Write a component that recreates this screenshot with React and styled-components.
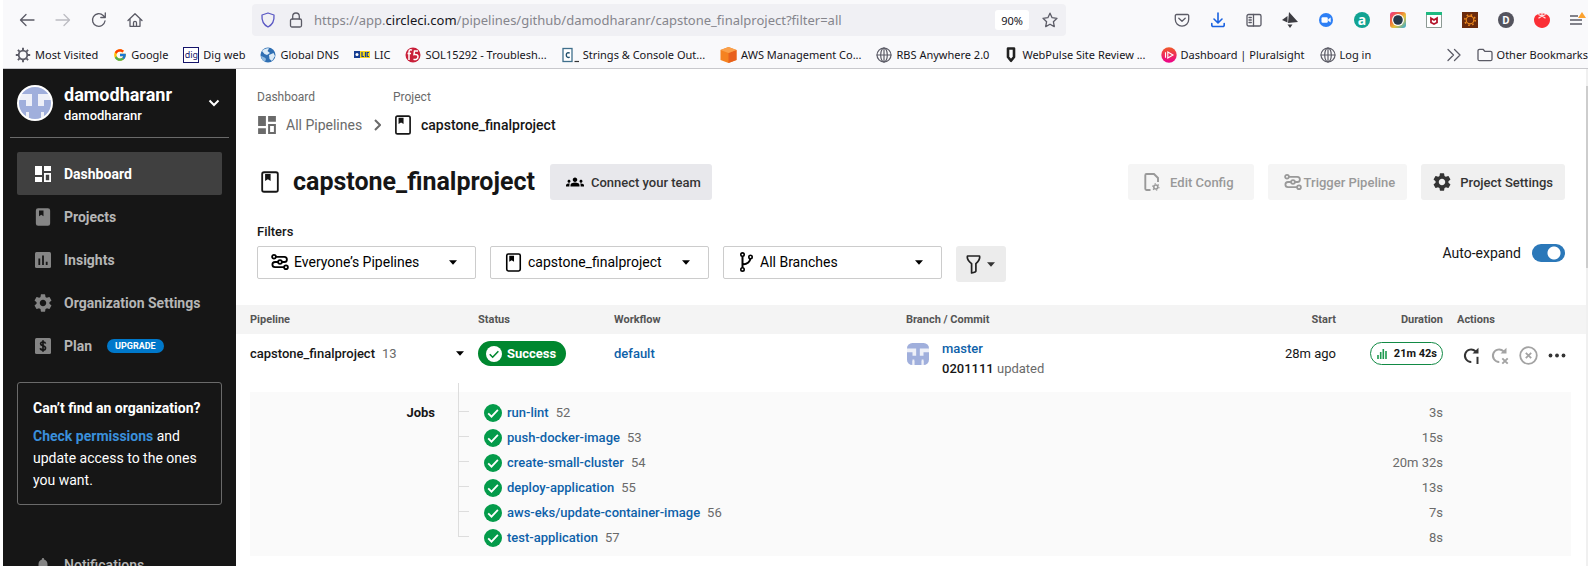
import React from 'react';
import styled, { createGlobalStyle, css } from 'styled-components';
import { FcGoogle } from 'react-icons/fc';
import { MdSettings, MdGroups, MdNotifications } from 'react-icons/md';

const UI = `Roboto, "Liberation Sans", sans-serif`;
const CHROME = `"Noto Sans", "Open Sans", sans-serif`;
const INK = '#161616';
const MUTED = '#6a6a6a';
const LINK = '#0d61a9';

const GlobalStyle = createGlobalStyle`
  * { box-sizing: border-box; }
  body { margin: 0; background: #fff; font-family: ${UI}; color: ${INK}; }
  button, select, input { font: inherit; color: inherit; }
  svg { display: block; flex: none; }
  a { text-decoration: none; }
`;

/* ---------- shell ---------- */
const Shell = styled.div`
  height: 100vh;
  display: flex;
  flex-direction: column;
  overflow: hidden;
  padding-left: 3px;
`;
const Body = styled.div`
  flex: 1;
  min-height: 0;
  display: flex;
`;

/* ---------- browser bars ---------- */
const Browser = styled.header`
  flex: none;
  background: #f9f9fb;
  border-bottom: 1px solid #c8c8cc;
  font-family: ${CHROME};
  color: #15141a;
`;
const Toolbar = styled.div`
  display: flex;
  align-items: center;
  height: 40px;
  padding: 0 2px 0 16px;
`;
const NavButtons = styled.div`
  display: flex;
  gap: 20px;
  margin-right: 109px;
`;
const IconButton = styled.button`
  display: flex;
  align-items: center;
  justify-content: center;
  min-width: 16px;
  height: 16px;
  padding: 0;
  border: 0;
  background: none;
  color: ${(p) => p.$color || '#5b5b66'};
`;
const AddressBar = styled.div`
  flex: 1;
  min-width: 0;
  display: flex;
  align-items: center;
  height: 32px;
  padding: 0 8px;
  border-radius: 4px;
  background: #f0f0f4;
`;
const LockButton = styled(IconButton)`
  margin: 0 10px 0 12px;
`;
const Address = styled.div`
  flex: 1;
  min-width: 0;
  font-size: 13px;
  line-height: 20px;
  white-space: nowrap;
  overflow: hidden;
  color: #85858c;
  outline: none;
  strong { font-weight: 400; color: #15141a; }
`;
const Zoom = styled.button`
  height: 20px;
  width: 34px;
  margin-right: 13px;
  padding: 0;
  border: 0;
  border-radius: 3px;
  background: #fff;
  font-size: 11px;
`;
const Extensions = styled.div`
  display: flex;
  justify-content: space-between;
  width: 412px;
  margin-left: 108px;
`;
const Tile = styled.span`
  display: flex;
  align-items: center;
  justify-content: center;
  width: 16px;
  height: 16px;
  border-radius: ${(p) => (p.$round ? '50%' : '0')};
  background: ${(p) => p.$bg};
  color: ${(p) => p.$fg || '#fff'};
  border: ${(p) => (p.$edge ? `1px solid ${p.$edge}` : '0')};
  font: ${(p) => p.$weight || 700} ${(p) => p.$size || 10}px/14px ${CHROME};
`;
const Bookmarks = styled.nav`
  display: flex;
  align-items: center;
  height: 28px;
  padding: 1px 0 0 12px;
  gap: 15px;
  white-space: nowrap;
`;
const Bookmark = styled.a`
  display: flex;
  align-items: center;
  gap: 4px;
  font-size: 11px;
  line-height: 16px;
  color: #15141a;
`;
const Overflow = styled(IconButton)`
  margin-left: auto;
`;

/* ---------- sidebar ---------- */
const Sidebar = styled.aside`
  flex: none;
  width: 233px;
  overflow: hidden;
  background: ${INK};
  color: #fff;
  padding: 0 7px;
`;
const Account = styled.button`
  display: flex;
  align-items: center;
  width: 100%;
  height: 69px;
  padding: 0 9px 0 7px;
  border: 0;
  border-bottom: 1px solid ${MUTED};
  background: none;
  text-align: left;
  color: #fff;
`;
const AccountNames = styled.span`
  flex: 1;
  margin-left: 11px;
  padding-top: 4px;
`;
const AccountOrg = styled.span`
  display: block;
  font-size: 18px;
  font-weight: 700;
  line-height: 22px;
`;
const AccountUser = styled.span`
  display: block;
  font-size: 13px;
  font-weight: 500;
  line-height: 20px;
`;
const Menu = styled.nav`
  display: flex;
  flex-direction: column;
  padding: 14px 7px 0;
`;
const MenuItem = styled.a`
  display: flex;
  align-items: center;
  height: 43px;
  padding-left: 17px;
  gap: 12px;
  border-radius: 2px;
  font-size: 14px;
  font-weight: ${(p) => (p.$plain ? 500 : 700)};
  color: ${(p) => (p.$active ? '#fff' : '#b5b5b5')};
  background: ${(p) => (p.$active ? '#404040' : 'transparent')};
  svg { color: ${(p) => (p.$active ? '#fff' : '#858585')}; }
`;
const Upgrade = styled.span`
  margin-left: 3px;
  padding: 0 8px;
  border-radius: 7px;
  background: #0078ca;
  color: #fff;
  font-size: 9px;
  font-weight: 700;
  line-height: 14px;
`;
const HelpCard = styled.section`
  margin: 15px 7px 24px;
  padding: 14px 15px 13px;
  border: 1px solid ${MUTED};
  border-radius: 3px;
  font-size: 14px;
  line-height: 22px;
  h2 { margin: 0 0 6px; font-size: 14px; font-weight: 700; line-height: 22px; white-space: nowrap; }
  p { margin: 0; }
  a { color: #3a8fdb; font-weight: 700; }
`;

/* ---------- main ---------- */
const Main = styled.main`
  flex: 1;
  min-width: 0;
  overflow: hidden;
`;
const Crumbs = styled.nav`
  display: flex;
  padding: 19px 21px 0;
`;
const Crumb = styled.div`
  color: ${MUTED};
  ${(p) => p.$wide && css`width: 136px;`}
`;
const CrumbLabel = styled.div`
  font-size: 12px;
  line-height: 18px;
`;
const CrumbLink = styled.a`
  display: flex;
  align-items: center;
  gap: ${(p) => (p.$current ? 8 : 9)}px;
  height: 38px;
  font-size: 14px;
  font-weight: ${(p) => (p.$current ? 500 : 400)};
  color: ${(p) => (p.$current ? INK : MUTED)};
  white-space: nowrap;
`;
const CrumbText = styled.span`
  margin-right: 3px;
`;
const TitleRow = styled.div`
  display: flex;
  align-items: center;
  gap: 15px;
  padding: 20px 21px 0 23px;
`;
const Title = styled.h1`
  display: flex;
  align-items: center;
  gap: 12px;
  margin: 0;
  font-size: 25px;
  font-weight: 700;
  line-height: 36px;
`;
const ButtonGroup = styled.div`
  display: flex;
  gap: 14px;
  margin-left: auto;
`;
const Button = styled.button`
  display: flex;
  align-items: center;
  height: 36px;
  gap: ${(p) => p.$gap}px;
  padding: 0 ${(p) => p.$pad || 12}px 0 ${(p) => p.$lead || 16}px;
  border: 0;
  border-radius: 3px;
  background: ${(p) => p.$bg || '#f0f0f0'};
  color: ${(p) => p.$fg || '#343434'};
  font-size: 13px;
  font-weight: 500;
  white-space: nowrap;
  &:disabled { background: #f5f5f5; color: #999; }
`;
const FilterBar = styled.div`
  display: flex;
  justify-content: space-between;
  padding: 22px 21px 23px;
`;
const FilterLabel = styled.div`
  font-size: 13px;
  font-weight: 500;
  line-height: 20px;
  margin-bottom: 4px;
`;
const FilterControls = styled.div`
  display: flex;
  align-items: flex-start;
  gap: 14px;
`;
const SelectBox = styled.label`
  display: flex;
  align-items: center;
  width: 219px;
  height: 33px;
  padding: 0 18px 1px 13px;
  gap: 5px;
  border: 1px solid #ccc;
  border-radius: 2px;
  background: #fff;
  color: #000;
  select {
    flex: 1;
    min-width: 0;
    padding: 0;
    border: 0;
    background: none;
    appearance: none;
    font-size: 14px;
    line-height: 20px;
  }
`;
const Toggle = styled.label`
  display: flex;
  align-items: center;
  gap: 11px;
  height: 18px;
  margin-top: 22px;
  font-size: 14px;
  input {
    appearance: none;
    width: 33px;
    height: 18px;
    margin: 0;
    border-radius: 9px;
    background: radial-gradient(circle at 22px 9px, #fff 6px, transparent 7px), #2b78b9;
  }
`;

const Table = styled.table`
  width: 100%;
  table-layout: fixed;
  border-collapse: collapse;
  font-size: 13px;
  line-height: 20px;
  th {
    height: 29px;
    padding: 0;
    background: #f4f4f4;
    color: #555;
    font-size: 11px;
    font-weight: 700;
    line-height: 16px;
    text-align: left;
  }
  td { padding: 0; }
`;
const Head = styled.th`
  && {
    text-align: ${(p) => (p.$right ? 'right' : 'left')};
    padding-left: ${(p) => (p.$inset ? 14 : 0)}px;
  }
`;
const Cell = styled.td`
  && {
    height: 58px;
    padding: 7px 0 0 ${(p) => (p.$inset ? 14 : 0)}px;
    vertical-align: top;
    text-align: ${(p) => (p.$right ? 'right' : 'left')};
  }
`;
const Line = styled.div`
  display: flex;
  align-items: center;
  height: 25px;
  gap: 7px;
  justify-content: ${(p) => (p.$right ? 'flex-end' : 'flex-start')};
`;
const Name = styled.span`
  font-weight: 500;
`;
const Num = styled.span`
  color: ${MUTED};
`;
const Expand = styled(IconButton)`
  margin-left: auto;
  margin-right: 10px;
`;
const Link = styled.a`
  font-weight: 500;
  color: ${LINK};
`;
const Status = styled.span`
  display: flex;
  align-items: center;
  gap: 5px;
  height: 25px;
  padding: 0 10px 0 8px;
  border-radius: 13px;
  background: #00872f;
  color: #fff;
  font-weight: 700;
`;
const Commit = styled.div`
  display: flex;
  gap: 13px;
  padding: 2px 0 0 1px;
`;
const CommitText = styled.div`
  line-height: 20px;
  margin-top: -4px;
`;
const Duration = styled.span`
  display: flex;
  align-items: center;
  gap: 7px;
  height: 23px;
  padding: 0 5px 0 6px;
  border: 1px solid #128a45;
  border-radius: 12px;
  font-size: 11px;
  font-weight: 700;
`;
const Actions = styled.div`
  display: flex;
  align-items: center;
  gap: 10px;
  height: 29px;
  padding-left: 6px;
`;
const JobsPanel = styled.div`
  display: flex;
  margin: 0 15px 0 14px;
  padding: 8px 128px 6px 0;
  background: #fafafa;
`;
const JobsLabel = styled.h2`
  width: 185px;
  margin: 0 23px 0 0;
  font-size: 13px;
  font-weight: 700;
  line-height: 25px;
  text-align: right;
`;
const JobList = styled.ul`
  flex: 1;
  margin: 0;
  padding: 0;
  list-style: none;
`;
const Job = styled.li`
  display: flex;
  align-items: center;
  height: 25px;
`;
const Connector = styled.span`
  align-self: flex-start;
  width: 11px;
  height: ${(p) => (p.$first ? 29 : 25)}px;
  margin: ${(p) => (p.$first ? -17 : -13)}px 15px 0 0;
  border-left: 1px solid #ddd;
  border-bottom: 1px solid #ddd;
`;
const JobName = styled(Link)`
  margin: 0 7px 0 5px;
`;
const JobTime = styled(Num)`
  margin-left: auto;
`;
const ScrollTrack = styled.div`
  flex: none;
  width: 2px;
  background: #f0f0f0;
  padding-top: 17px;
`;
const ScrollThumb = styled.div`
  height: 38%;
  background: #cdcdcd;
`;

/* ---------- icons ---------- */
const Svg = ({ s = 16, w, h, vb = '0 0 16 16', children, ...rest }) => (
  <svg width={w || s} height={h || s} viewBox={vb} fill="none" aria-hidden="true" {...rest}>{children}</svg>
);
const Stroke = (props) => (
  <Svg stroke="currentColor" strokeWidth="1.3" strokeLinecap="round" strokeLinejoin="round" {...props} />
);
const Back = () => <Stroke><path d="M15 8H2M7 2.5 1.5 8 7 13.5" /></Stroke>;
const Forward = () => <Stroke><path d="M1 8h13M9 2.5 14.5 8 9 13.5" /></Stroke>;
const Reload = () => <Stroke><path d="M14 9a6.3 6.3 0 1 1-1.8-5.5L14 5.2M14.3 1v4.5H9.8" /></Stroke>;
const Home = () => <Stroke><path d="M1 8.5 8 1.7l7 6.8M3 7v7.3h10V7M6.500 14v-3.200a1.500 1.500 0 0 1 3 0V14" /></Stroke>;
const Shield = () => <Stroke stroke="#5a58c4"><path d="M8 1 14 3c.4 5-1 9.500-6 12C3 12.500 1.600 8 2 3Z" /></Stroke>;
const Lock = () => <Stroke><rect x="2.5" y="7" width="11" height="8" rx="1.5" /><path d="M4.700 7V4.300a3.300 3.300 0 0 1 6.600 0V7" /></Stroke>;
const Star = () => <Stroke><path d="m8 1.200 2.100 4.500 4.900.6-3.600 3.400.9 4.900L8 12.200l-4.300 2.400.9-4.900L1 6.300l4.900-.6Z" /></Stroke>;
const Pocket = () => <Stroke><path d="M2.500 2.500h11a1.200 1.200 0 0 1 1.200 1.200v3.800a6.700 6.700 0 0 1-13.400 0V3.700a1.200 1.200 0 0 1 1.200-1.200ZM4.800 6.300 8 9.300l3.200-3" /></Stroke>;
const Download = () => <Stroke stroke="#1a62e0" strokeWidth="1.6"><path d="M8 1v9.500M4 7l4 4 4-4M1.800 11.500v1.700a1.300 1.300 0 0 0 1.300 1.300h9.800a1.300 1.300 0 0 0 1.300-1.300v-1.700" /></Stroke>;
const SidebarIcon = () => <Stroke><rect x="1" y="2.5" width="14" height="11.5" rx="1.5" /><path d="M7.500 2.500V14M3 5.500h2.300M3 8h2.300M3 10.500h2.300" /></Stroke>;
const Arrowhead = () => <Svg fill="#3d3d42"><path d="M7 0 16 10 6 11ZM5.500 4v6.500L0 8ZM5.500 12.500h5L8 16Z" /></Svg>;
const Camera = () => <Svg><circle cx="8" cy="8" r="7" fill="#2d7ff5" /><rect x="3.5" y="5.3" width="6.3" height="5.4" rx="1.2" fill="#fff" /><path d="m10.200 7.300 2.500-1.700v4.800l-2.500-1.700Z" fill="#fff" /></Svg>;
const Lens = () => (
  <Svg>
    <defs><linearGradient id="lens" x1="0" y1="0" x2="1" y2="1"><stop offset="0" stopColor="#f0308a" /><stop offset=".35" stopColor="#f0703a" /><stop offset=".6" stopColor="#e8c23a" /><stop offset="1" stopColor="#25a8e0" /></linearGradient></defs>
    <rect width="16" height="16" rx="3" fill="url(#lens)" /><circle cx="8" cy="8" r="6" fill="#fff" /><circle cx="8" cy="8" r="4.8" fill="#26384a" />
  </Svg>
);
const Mcafee = () => <Svg><path d="M.5.5h15v15H.5Z" fill="#fff" stroke="#8d9a94" /><path d="M0 0h16v3H0Z" fill="#1fb980" /><path d="M5 6.200 8 8l3-1.800v4.300L8 12l-3-1.500Z" stroke="#b3152b" strokeWidth="1.8" /></Svg>;
const GearTile = () => <Svg><rect width="16" height="16" fill="#6b2a0c" /><circle cx="8" cy="8" r="3.8" stroke="#ef8a1d" strokeWidth="1.2" /><circle cx="8" cy="8" r="5.2" stroke="#ef8a1d" strokeWidth="1.6" strokeDasharray="1.6 2.484" /></Svg>;
const Tomato = () => <Svg><path d="M8 1.500c5 0 8 2.500 8 6.500S12.500 16 8 16 0 12.300 0 8s3-6.500 8-6.500Z" fill="#fb2f35" /><path d="M8 0v4M4.300 2.500 8 4l3.700-1.500M4.500 6.300 8 4l3.500 2.300" stroke="#fde4e4" strokeWidth="1.2" /></Svg>;
const Hamburger = () => <Svg><path d="M0 4h8M0 8h12M0 12h12" stroke="#5b5b66" strokeWidth="1.3" /><path d="m12 0 4 6H8Z" fill="#fca22f" /></Svg>;
const Cog = () => <Svg><circle cx="8" cy="8" r="4.3" stroke="#5b5b66" strokeWidth="1.8" /><path d="M8 .8v2.500M8 12.700v2.500M.8 8h2.500M12.700 8h2.500M2.900 2.900l1.700 1.700M11.400 11.400l1.700 1.700M2.900 13.100l1.700-1.700M11.400 4.600l1.700-1.700" stroke="#5b5b66" strokeWidth="1.9" /></Svg>;
const Earth = () => <Svg><circle cx="8" cy="8" r="7.5" fill="#2f6fb3" /><path d="M2 4c2-2 5-3 7-2.500L7.500 4 10 6 7 8 4.500 7ZM9 8l4.500-2 1.500 3-3 5-2.500-2Z" fill="#dcebf7" /><path d="M1 9c2 1 4 1 5 3l-1 3C3 14 1.200 12 1 9Z" fill="#8fb9de" /></Svg>;
const F5 = () => <Svg><circle cx="8" cy="8" r="7.5" fill="#c9203a" /><path d="M7 3.200c-2-1-3 0-3 2V13M2.500 6.500H6M13 4H9.500L9 7.500c3-.5 4 .8 4 2.300 0 2-2 3.200-4.500 2.400" stroke="#fff" strokeWidth="1.5" /></Svg>;
const Lic = () => <Svg><path d="M0 4h6v7H0Z" fill="#173e91" /><path d="M6 4h10v7H6Z" fill="#f4d51d" /><circle cx="3" cy="7.5" r="1.5" fill="#fff" /><path d="M8 5v4.500h2M11.500 5v5M15 5.500h-1.800v4H15" stroke="#173e91" strokeWidth="1.2" /></Svg>;
const Cube = () => <Svg w={17} vb="0 0 17 16"><path d="M8.500 0 16.500 3v10l-8 3-8-3V3Z" fill="#f58220" /><path d="M8.500 6 16.500 3v10l-8 3Z" fill="#e8601c" /><path d="M8.500 0 16.500 3l-8 3-8-3Z" fill="#faa04b" /></Svg>;
const Globe = () => <Stroke strokeWidth="1.2" stroke="#5b5b66"><circle cx="8" cy="8" r="7" /><ellipse cx="8" cy="8" rx="3.3" ry="7" /><path d="M1 8h14M8 1v14" /></Stroke>;
const DarkShield = () => <Svg w={14} vb="0 0 14 16"><path d="M4 1.500h6v8.500L7 13.800 4 10Z" fill="#fff" stroke="#222" strokeWidth="2.6" strokeLinejoin="round" /></Svg>;
const Plural = () => (
  <Svg><defs><linearGradient id="plural" x1="0" y1="0" x2="0" y2="1"><stop stopColor="#f05a28" /><stop offset="1" stopColor="#ec008c" /></linearGradient></defs><circle cx="8" cy="8" r="7.7" fill="url(#plural)" /><path d="M6.800 5 12 8l-5.200 3ZM4.500 5.300v5.400" stroke="#fff" strokeWidth="1.1" /></Svg>
);
const Folder = () => <Stroke stroke="#5b5b66"><path d="M1 3.800a1.500 1.500 0 0 1 1.500-1.500H6l1.800 2h5.700A1.500 1.500 0 0 1 15 5.800v6.400a1.500 1.500 0 0 1-1.500 1.500h-11A1.500 1.500 0 0 1 1 12.200Z" /></Stroke>;
const More = () => <Stroke><path d="m2 2.500 5.500 5.500L2 13.500M8.500 2.500 14 8l-5.500 5.500" /></Stroke>;
const Terminal = () => (
  <Svg w={17} vb="0 0 17 16">
    <rect x="1" y="1.5" width="9" height="13" stroke="#3f6f8c" strokeWidth="1.3" fill="#fff" />
    <path d="M7.700 6.200c-1.600-1-3.400-.2-3.400 1.900s1.800 3 3.400 1.900" stroke="#22506d" strokeWidth="1.4" /><path d="M12.500 14.500H17" stroke="#333" strokeWidth="1.2" />
  </Svg>
);

const DashboardIcon = ({ s = 18 }) => <Svg s={s} vb="0 0 18 18"><path d="M1 1h7v9H1ZM1 12h7v5H1ZM10 1h7v5h-7Z" fill="currentColor" /><path d="M10.900 8.900h5.200v7.200h-5.200Z" stroke="currentColor" strokeWidth="1.8" /></Svg>;
const Book = ({ s = 18, solid }) => (
  <Svg s={s} vb="0 0 18 18">
    <rect x="2.6" y="1" width="12.8" height="16" rx="1.5" stroke="currentColor" strokeWidth="1.5" fill={solid ? 'currentColor' : 'none'} />
    <path d="M5 2.500h4.500v5.700L7.250 6.800 5 8.200Z" fill={solid ? INK : 'currentColor'} />
  </Svg>
);
const Gear = () => <MdSettings size={18} viewBox="2 2 20 20" />;
const Insights = () => <Svg s={18} vb="0 0 18 18"><rect x="1" y="1" width="16" height="16" rx="1.5" fill="currentColor" /><path d="M5.300 7.500V14M9 4.500V14M12.700 10.800V14" stroke={INK} strokeWidth="1.8" /></Svg>;
const Plan = () => <Svg s={18} vb="0 0 18 18"><rect x="1" y="1" width="16" height="16" rx="1.5" fill="currentColor" /><path d="M11.500 6.600C11.300 5.400 10.300 5 9 5S6.600 5.500 6.600 6.800C6.600 9.400 11.500 8 11.500 10.900 11.500 12.300 10.300 13 9 13s-2.500-.6-2.600-1.900M9 3.300v11.400" stroke={INK} strokeWidth="1.7" /></Svg>;
const Pipelines = () => (
  <Svg s={18} vb="0 0 18 18" stroke="currentColor" strokeWidth="1.8">
    <circle cx="3" cy="3.8" r="1.9" /><circle cx="9" cy="9" r="1.9" /><circle cx="15" cy="14.2" r="1.9" />
    <path d="M5 3.800h8.300a2.600 2.600 0 0 1 0 5.200H11M7 9H4a2.600 2.600 0 0 0 0 5.200h9" />
  </Svg>
);
const Branch = () => (
  <Svg s={18} h={20} vb="0 0 18 20" stroke="currentColor" strokeWidth="1.6">
    <circle cx="5.5" cy="2.6" r="1.7" /><circle cx="5.5" cy="17.4" r="1.7" /><circle cx="13.5" cy="5" r="1.7" />
    <path d="M5.500 4.300v11.400M13.300 6.700c-.3 4-3.800 5.300-7.800 5.800" strokeWidth="2" />
  </Svg>
);
const Funnel = () => <Svg w={15} h={19} vb="0 0 15 19" stroke="#222" strokeWidth="1.7" strokeLinejoin="round"><path d="M1.500 1h12c.8 2.700-1 5.300-3.600 7.600V16c0 .7-1.300 1.500-4.300 2V8.600C2.500 6.300.7 3.700 1.500 1Z" /></Svg>;
const Caret = () => <Svg w={8} h={5} vb="0 0 8 5"><path d="M0 .3h8L4 4.700Z" fill="currentColor" /></Svg>;
const Chevron = ({ right }) => (
  <Svg w={right ? 7 : 12} h={12} vb={right ? '0 0 7 12' : '0 0 12 12'} stroke="currentColor" strokeWidth="2">
    <path d={right ? 'M1 1l5 5-5 5' : 'M1.500 3.500 6 8l4.500-4.500'} />
  </Svg>
);
const EditFile = () => (
  <Svg w={16} h={18} vb="0 0 16 18" stroke="currentColor" strokeWidth="1.9">
    <path d="M6.500 17H2.500A1.200 1.200 0 0 1 1.300 15.800V2.200A1.200 1.200 0 0 1 2.500 1H10l4 4v4" /><circle cx="11.8" cy="14" r="2" strokeWidth="1.6" /><circle cx="11.8" cy="14" r="3.2" strokeWidth="1.1" strokeDasharray="1.4 1.95" />
  </Svg>
);
const Check = ({ s = 18, bg = '#049b4a', fg = '#fff' }) => (
  <Svg s={s} vb="0 0 18 18"><circle cx="9" cy="9" r="9" fill={bg} /><path d="m4.200 9.300 3.300 3.300 6.400-6.700" stroke={fg} strokeWidth="1.8" /></Svg>
);
const Bars = () => <Svg w={10} h={12} vb="0 0 10 12" stroke="#1d9a4e" strokeWidth="1.6"><path d="M1 7v4M3.700 4v7M6.300 1v10M9 3v8" /></Svg>;
const Rerun = ({ kind }) => (
  <Svg s={18} vb="0 0 18 18" stroke="currentColor" strokeWidth="2">
    <path d="M8.300 14.900A6.200 6.200 0 1 1 12.500 4.300" /><path d="M9.500 6.500H15.500V.8Z" fill="currentColor" stroke="none" />
    {kind === 'failed' ? <path d="m11.300 11.300 5.400 5.400M16.700 11.300l-5.400 5.400" strokeWidth="1.9" /> : <path d="M14.500 9.800V17" strokeWidth="2" />}
  </Svg>
);
const Cancel = () => <Svg s={19} vb="0 0 19 19" stroke="currentColor" strokeWidth="1.8"><circle cx="9.5" cy="9.5" r="8.3" /><path d="m6.800 6.800 5.400 5.400M12.200 6.800l-5.400 5.400" /></Svg>;
const Dots = () => <Svg w={18} h={5} vb="0 0 18 5" fill="currentColor"><circle cx="2.5" cy="2.5" r="1.9" /><circle cx="9" cy="2.5" r="1.9" /><circle cx="15.5" cy="2.5" r="1.9" /></Svg>;

const Identicon = ({ s, round }) => (
  <Svg s={s} vb="0 0 36 36">
    <defs><clipPath id={`id${s}`}><rect x={round ? 2 : 0} y={round ? 2 : 0} width={round ? 32 : 36} height={round ? 32 : 36} rx={round ? 16 : 9} /></clipPath></defs>
    {round && <circle cx="18" cy="18" r="18" fill="#fff" />}
    <g clipPath={`url(#id${s})`}>
      <rect width="36" height="36" fill="#eef0f8" />
      <path d="M0 0h36v9H21v12h6v-6h9v21h-9v-7h-3v7H12v-7H9v7H0V15h9v6h6V9H0Z" fill="#a0afdc" />
      <path d="M9 27h3v9H9ZM24 27h3v9h-3Z" fill="#eef0f8" />
    </g>
  </Svg>
);

/* ---------- data ---------- */
const bookmarks = [
  ['Most Visited', <Cog />],
  ['Google', <FcGoogle size={14} />],
  ['Dig web', <Tile $bg="#fff" $fg="#15146b" $edge="#15146b" $weight={400} $size={9}>dig</Tile>],
  ['Global DNS', <Earth />],
  ['LIC', <Lic />],
  ['SOL15292 - Troublesh...', <F5 />],
  ['Strings & Console Out...', <Terminal />],
  ['AWS Management Co...', <Cube />],
  ['RBS Anywhere 2.0', <Globe />],
  ['WebPulse Site Review ...', <DarkShield />],
  ['Dashboard | Pluralsight', <Plural />],
  ['Log in', <Globe />],
];
const extensions = [
  ['Save to Pocket', <Pocket />],
  ['Downloads', <Download />],
  ['Sidebars', <SidebarIcon />],
  ['Send', <Arrowhead />],
  ['Meetings', <Camera />],
  ['Assistant', <Tile $round $bg="#12a392" $size={14}>a</Tile>],
  ['Capture', <Lens />],
  ['Web protection', <Mcafee />],
  ['Developer settings', <GearTile />],
  ['Dictionary', <Tile $round $bg="#54545e">D</Tile>],
  ['Timer', <Tomato />],
  ['Menu', <Hamburger />],
];
const menu = [
  ['Dashboard', <DashboardIcon />],
  ['Projects', <Book solid />],
  ['Insights', <Insights />],
  ['Organization Settings', <Gear />],
  ['Plan', <Plan />],
];
const jobs = [
  ['run-lint', 52, '3s'],
  ['push-docker-image', 53, '15s'],
  ['create-small-cluster', 54, '20m 32s'],
  ['deploy-application', 55, '13s'],
  ['aws-eks/update-container-image', 56, '7s'],
  ['test-application', 57, '8s'],
];

const Filter = ({ icon, name, value }) => (
  <SelectBox>
    {icon}
    <select aria-label={name} defaultValue={value}><option>{value}</option></select>
    <Caret />
  </SelectBox>
);

export default function App() {
  return (
    <Shell>
      <GlobalStyle />
      <Browser>
        <Toolbar>
          <NavButtons>
            <IconButton aria-label="Back"><Back /></IconButton>
            <IconButton aria-label="Forward" $color="#bcbcc2"><Forward /></IconButton>
            <IconButton aria-label="Reload"><Reload /></IconButton>
            <IconButton aria-label="Home"><Home /></IconButton>
          </NavButtons>
          <AddressBar>
            <IconButton aria-label="Tracking protection"><Shield /></IconButton>
            <LockButton aria-label="Site information"><Lock /></LockButton>
            <Address role="textbox" aria-label="Address" contentEditable suppressContentEditableWarning spellCheck={false}>
              https://app.<strong>circleci.com</strong>/pipelines/github/damodharanr/capstone_finalproject?filter=all
            </Address>
            <Zoom>90%</Zoom>
            <IconButton aria-label="Bookmark this page"><Star /></IconButton>
          </AddressBar>
          <Extensions>
            {extensions.map(([name, icon]) => <IconButton key={name} aria-label={name}>{icon}</IconButton>)}
          </Extensions>
        </Toolbar>
        <Bookmarks>
          {bookmarks.map(([name, icon]) => <Bookmark key={name} href="#">{icon}{name}</Bookmark>)}
          <Overflow aria-label="More bookmarks"><More /></Overflow>
          <Bookmark href="#"><Folder />Other Bookmarks</Bookmark>
        </Bookmarks>
      </Browser>

      <Body>
        <Sidebar>
          <Account>
            <Identicon s={36} round />
            <AccountNames>
              <AccountOrg>damodharanr</AccountOrg>
              <AccountUser>damodharanr</AccountUser>
            </AccountNames>
            <Chevron />
          </Account>
          <Menu>
            {menu.map(([name, icon], i) => (
              <MenuItem key={name} href="#" $active={i === 0}>
                {icon}{name}{name === 'Plan' && <Upgrade>UPGRADE</Upgrade>}
              </MenuItem>
            ))}
          </Menu>
          <HelpCard>
            <h2>Can’t find an organization?</h2>
            <p><a href="#">Check permissions</a> and update access to the ones you want.</p>
          </HelpCard>
          <Menu as="div">
            <MenuItem href="#" $plain><MdNotifications size={18} />Notifications</MenuItem>
          </Menu>
        </Sidebar>

        <Main>
          <Crumbs aria-label="Breadcrumb">
            <Crumb $wide>
              <CrumbLabel>Dashboard</CrumbLabel>
              <CrumbLink href="#"><DashboardIcon s={20} /><CrumbText>All Pipelines</CrumbText><Chevron right /></CrumbLink>
            </Crumb>
            <Crumb>
              <CrumbLabel>Project</CrumbLabel>
              <CrumbLink href="#" $current><Book s={20} />capstone_finalproject</CrumbLink>
            </Crumb>
          </Crumbs>

          <TitleRow>
            <Title><Book s={22} />capstone_finalproject</Title>
            <Button $bg="#e8e8ec" $gap={7} $pad={11}><MdGroups size={18} color="#000" />Connect your team</Button>
            <ButtonGroup>
              <Button disabled $gap={10} $pad={20}><EditFile />Edit Config</Button>
              <Button disabled $gap={2}><Pipelines />Trigger Pipeline</Button>
              <Button $gap={9} $lead={12}><Gear />Project Settings</Button>
            </ButtonGroup>
          </TitleRow>

          <FilterBar>
            <div>
              <FilterLabel>Filters</FilterLabel>
              <FilterControls>
                <Filter icon={<Pipelines />} name="Pipelines" value="Everyone’s Pipelines" />
                <Filter icon={<Book s={19} />} name="Project" value="capstone_finalproject" />
                <Filter icon={<Branch />} name="Branch" value="All Branches" />
                <Button $bg="#ececec" $gap={6} $lead={10} $pad={11} aria-label="More filters"><Funnel /><Caret /></Button>
              </FilterControls>
            </div>
            <Toggle>Auto-expand<input type="checkbox" role="switch" defaultChecked /></Toggle>
          </FilterBar>

          <Table>
            <colgroup>
              <col width="242" /><col width="136" /><col width="292" /><col /><col width="120" /><col width="107" /><col width="143" />
            </colgroup>
            <thead>
              <tr>
                <Head $inset>Pipeline</Head><Head>Status</Head><Head>Workflow</Head><Head>Branch / Commit</Head>
                <Head $right>Start</Head><Head $right>Duration</Head><Head $inset>Actions</Head>
              </tr>
            </thead>
            <tbody>
              <tr>
                <Cell $inset><Line><Name>capstone_finalproject</Name><Num>13</Num><Expand aria-label="Collapse" $color="#000"><Caret /></Expand></Line></Cell>
                <Cell><Line><Status><Check s={16} bg="#fff" fg="#00872f" />Success</Status></Line></Cell>
                <Cell><Line><Link href="#">default</Link></Line></Cell>
                <Cell>
                  <Commit>
                    <Identicon s={22} />
                    <CommitText>
                      <div><Link href="#">master</Link></div>
                      <div><Name>0201111</Name> <Num>updated</Num></div>
                    </CommitText>
                  </Commit>
                </Cell>
                <Cell $right><Line $right>28m ago</Line></Cell>
                <Cell $right><Line $right><Duration><Bars />21m 42s</Duration></Line></Cell>
                <Cell $inset>
                  <Actions>
                    <IconButton aria-label="Rerun" $color="#343434"><Rerun /></IconButton>
                    <IconButton aria-label="Rerun from failed" $color="#a3a3a3" disabled><Rerun kind="failed" /></IconButton>
                    <IconButton aria-label="Cancel" $color="#a3a3a3" disabled><Cancel /></IconButton>
                    <IconButton aria-label="More actions" $color="#343434"><Dots /></IconButton>
                  </Actions>
                </Cell>
              </tr>
              <tr>
                <td colSpan={7}>
                  <JobsPanel>
                    <JobsLabel>Jobs</JobsLabel>
                    <JobList>
                      {jobs.map(([name, num, time], i) => (
                        <Job key={name}>
                          <Connector $first={i === 0} />
                          <Check />
                          <JobName href="#">{name}</JobName>
                          <Num>{num}</Num>
                          <JobTime>{time}</JobTime>
                        </Job>
                      ))}
                    </JobList>
                  </JobsPanel>
                </td>
              </tr>
            </tbody>
          </Table>
        </Main>
        <ScrollTrack><ScrollThumb /></ScrollTrack>
      </Body>
    </Shell>
  );
}
